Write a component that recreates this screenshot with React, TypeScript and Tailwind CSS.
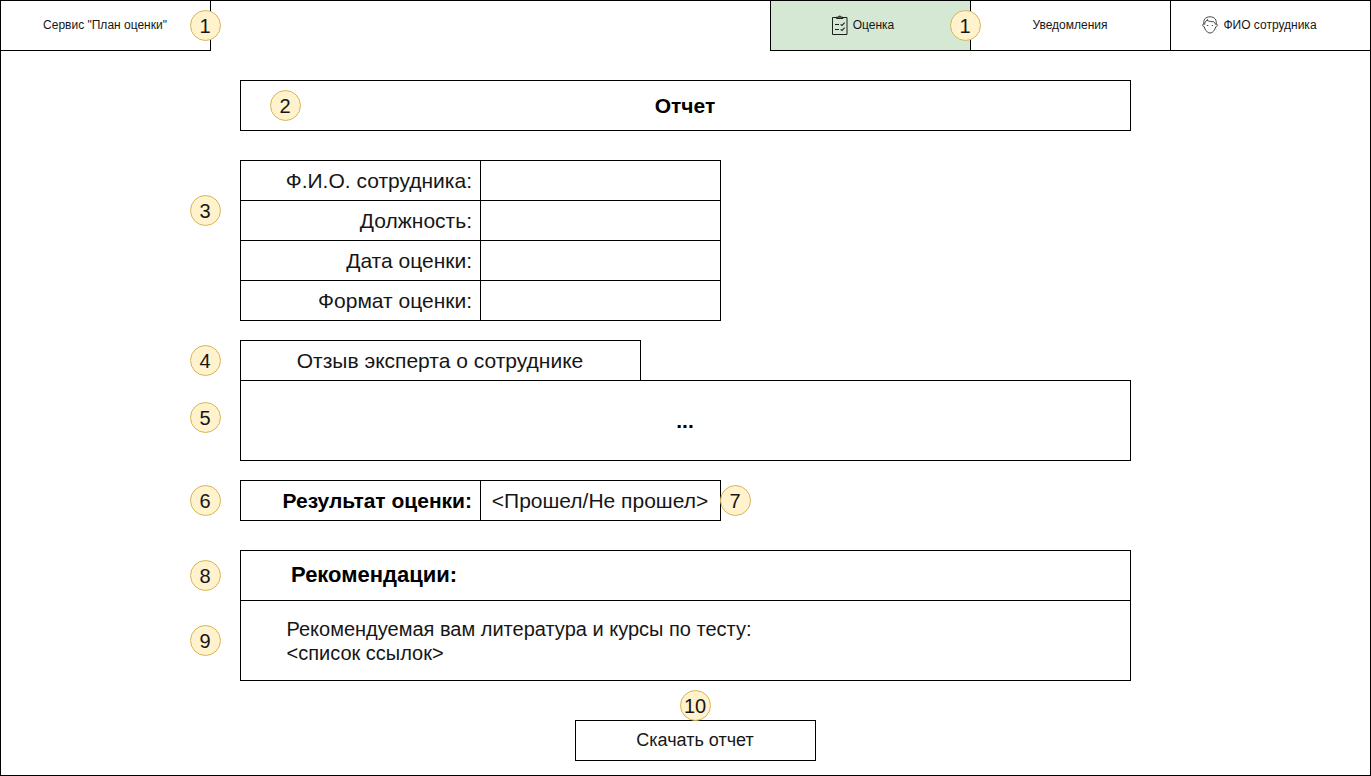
import type { ReactNode } from "react";

function Badge({ children, className }: { children: ReactNode; className: string }) {
  return (
    <span
      className={`absolute z-10 flex h-[31px] w-[31px] items-center justify-center rounded-full border border-[#d6b656] bg-[#fff2cc] pr-px text-[20px] leading-none text-[#161616] ${className}`}
    >
      {children}
    </span>
  );
}

function ChecklistIcon() {
  return (
    <svg width="17" height="20" viewBox="0 0 17 20" fill="none" stroke="#1c211c" strokeWidth="1">
      <path d="M5.5 2.500H1.500v17h14.500V2.500h-4.500" />
      <path d="M5.500 3.500V2.200h1.800c.3-1.600 2.600-1.600 2.900 0H12v1.300z" fill="#5d665d" />
      <path d="M4 9.500h4M4 14.500h4" strokeWidth="1.100" />
      <path d="M9.600 9.300l1.400 1.200 2.600-2.900M9.600 14.300l1.400 1.200 2.600-2.900" strokeWidth="1.100" />
    </svg>
  );
}

function FaceIcon() {
  return (
    <svg width="16" height="18" viewBox="0 0 16 18" fill="none" stroke="#333" strokeWidth="0.9">
      <path d="M2 8.200C.9 7.900.5 8.600.8 9.600c.2.900.8 1.300 1.500 1.200.8 3.300 3 6.200 5.700 6.200s4.900-2.900 5.700-6.200c.7.100 1.300-.3 1.500-1.200.3-1-.1-1.700-1.200-1.400" />
      <path d="M2 8.500C.8 4 3.400.8 8 .8s7.200 3.200 6 7.700" />
      <path d="M2.700 8.500c0-2 .7-3.200 2.200-4.200 2.200 1.200 4.500 1.400 6.800 1.500 1.100.6 1.500 1.500 1.600 2.700M4.900 4.300l.8-1.200" />
      <path d="M4.900 9.500h1.300M9.800 9.500h1.300" />
    </svg>
  );
}

const fields = ["Ф.И.О. сотрудника:", "Должность:", "Дата оценки:", "Формат оценки:"];

export default function App() {
  return (
    <div className="h-[776px] w-[1371px] overflow-hidden border border-black bg-white font-['Liberation_Sans',Arial,sans-serif] text-[21px] text-[#161616]">
      <header className="-mx-px -mt-px flex h-[51px] justify-between text-[12px]">
        <div className="relative flex w-[211px] items-center justify-center border border-black pr-px pb-[2px]">
          <span>Сервис "План оценки"</span>
          <Badge className="top-[9px] -right-[11px]">1</Badge>
        </div>
        <nav className="flex w-[601px] border border-black">
          <div className="relative flex w-[200px] items-center justify-center gap-[5px] border-r border-black bg-[#d5e8d4] pr-4 pb-[2px]">
            <ChecklistIcon />
            <span>Оценка</span>
            <Badge className="top-[9px] -right-[11px]">1</Badge>
          </div>
          <div className="flex w-[200px] items-center justify-center border-r border-black pr-px pb-[2px]">
            Уведомления
          </div>
          <div className="flex flex-1 items-center justify-center gap-[5px] pr-[22px] pb-[2px]">
            <FaceIcon />
            <span>ФИО сотрудника</span>
          </div>
        </nav>
      </header>

      <main className="ml-[239px] flex w-[891px] flex-col pt-[29px]">
        <div className="relative flex h-[51px] items-center justify-center border border-black pr-px font-bold text-black">
          <Badge className="top-[9px] left-[29px] font-normal">2</Badge>
          <h1>Отчет</h1>
        </div>

        <section className="relative mt-[29px] w-[481px] border-x border-t border-black">
          <Badge className="top-[34px] -left-[51px]">3</Badge>
          {fields.map((label) => (
            <div key={label} className="flex h-10 border-b border-black">
              <div className="flex w-[240px] items-center justify-end border-r border-black pr-2">{label}</div>
            </div>
          ))}
        </section>

        <section className="mt-[19px]">
          <div className="relative flex h-10 w-[401px] items-center justify-center border border-b-0 border-black pr-px">
            <Badge className="top-[4px] -left-[51px]">4</Badge>
            <h2>Отзыв эксперта о сотруднике</h2>
          </div>
          <div className="relative flex h-[81px] items-center justify-center border border-black pr-px font-bold text-black">
            <Badge className="top-[21.4px] -left-[51px] font-normal">5</Badge>
            ...
          </div>
        </section>

        <section className="relative mt-[19px] flex h-[41px] w-[481px] border border-black">
          <Badge className="top-[4px] -left-[51px]">6</Badge>
          <div className="flex w-[240px] items-center justify-end border-r border-black pr-2 font-bold text-black">
            Результат оценки:
          </div>
          <div className="flex flex-1 items-center justify-center pr-px">&lt;Прошел/Не прошел&gt;</div>
          <Badge className="top-[4px] -right-[31px]">7</Badge>
        </section>

        <section className="mt-[29px] border border-black">
          <div className="relative flex h-[50px] items-center border-b border-black pb-[2px] pl-[50px] text-[22px] font-bold text-black">
            <Badge className="top-[9px] -left-[51px] font-normal">8</Badge>
            <h2>Рекомендации:</h2>
          </div>
          <div className="relative flex h-[79px] flex-col justify-center pl-[45.5px] text-[20px] leading-6">
            <Badge className="top-[24px] -left-[51px]">9</Badge>
            <p>Рекомендуемая вам литература и курсы по тесту:</p>
            <p>&lt;список ссылок&gt;</p>
          </div>
        </section>

        <button className="relative mt-[39px] ml-[335px] flex h-[41px] w-[241px] items-center justify-center border border-black pr-px text-[18px]">
          <Badge className="-top-[31px] left-[104px]">10</Badge>
          Скачать отчет
        </button>
      </main>
    </div>
  );
}
